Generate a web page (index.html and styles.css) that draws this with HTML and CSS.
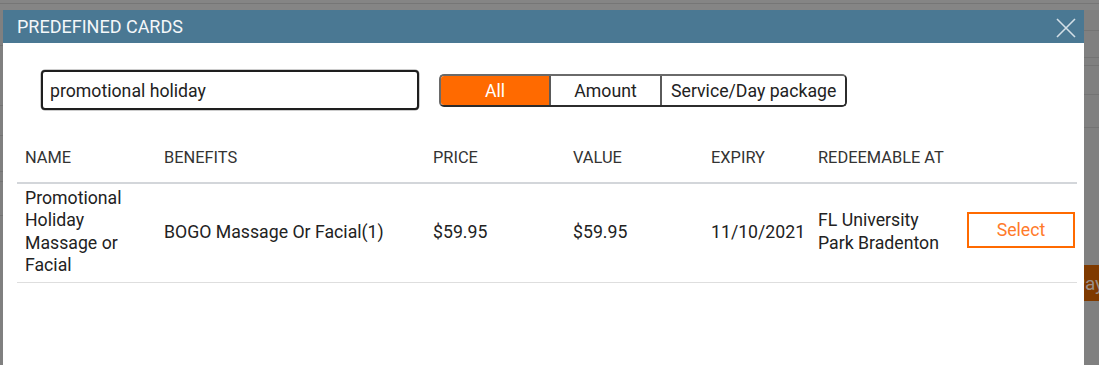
FILE: index.html
```html
<!DOCTYPE html>
<html lang="en">
<head>
<meta charset="utf-8">
<title>Predefined Cards</title>
<link rel="stylesheet" href="styles.css">
</head>
<body>
<div class="page">
  <div class="topbar"><div class="topline"></div></div>
  <div class="stage">
    <div class="strip strip-left">
      <div class="seg s36"></div>
      <div class="seg s60"></div>
      <div class="seg s30"></div>
      <div class="seg s36"></div>
      <div class="seg s10"></div>
      <div class="seg s34"></div>
    </div>

    <div class="modal">
      <div class="modal-header">
        <span class="modal-title">PREDEFINED CARDS</span>
        <button class="close-btn" aria-label="Close">
          <svg width="20" height="20" viewBox="0 0 20 20"><path d="M1 1 L19 19 M19 1 L1 19" stroke="#d3dfe7" stroke-width="1.6" fill="none"/></svg>
        </button>
      </div>
      <div class="modal-body">
        <div class="toolbar">
          <input class="search" type="text" value="promotional holiday">
          <div class="seg-group">
            <button class="seg-btn active btn-all">All</button>
            <button class="seg-btn btn-amount">Amount</button>
            <button class="seg-btn btn-service">Service/Day package</button>
          </div>
        </div>
        <table class="cards">
          <colgroup>
            <col class="c-name"><col class="c-benefits"><col class="c-price"><col class="c-value"><col class="c-expiry"><col class="c-redeem"><col class="c-action">
          </colgroup>
          <thead>
            <tr>
              <th>NAME</th><th>BENEFITS</th><th>PRICE</th><th>VALUE</th><th>EXPIRY</th><th>REDEEMABLE AT</th><th></th>
            </tr>
          </thead>
          <tbody>
            <tr>
              <td>Promotional Holiday Massage or Facial</td>
              <td>BOGO Massage Or Facial(1)</td>
              <td>$59.95</td>
              <td>$59.95</td>
              <td>11/10/2021</td>
              <td>FL University Park Bradenton</td>
              <td class="action"><button class="select-btn">Select</button></td>
            </tr>
          </tbody>
        </table>
      </div>
    </div>

    <div class="strip strip-right">
      <div class="seg s21"></div>
      <div class="seg s27"></div>
      <div class="seg s8"></div>
      <div class="seg s29"></div>
      <div class="seg s33"></div>
      <div class="spacer"></div>
      <div class="pay"><span>Pay</span></div>
      <div class="fill"></div>
    </div>
  </div>
</div>
</body>
</html>
```

FILE: styles.css
```css
* { box-sizing: border-box; }
html, body { margin: 0; padding: 0; }
body {
  width: 1099px;
  height: 365px;
  overflow: hidden;
  background: #808080;
  font-family: Roboto, "Liberation Sans", Arial, sans-serif;
  color: #222;
}
.page { display: flex; flex-direction: column; height: 365px; }
.topbar { height: 10px; background: #858585; padding-top: 3px; }
.topline { height: 1px; background: #767676; }
.stage { display: flex; flex: 1; min-height: 0; }

.strip { display: flex; flex-direction: column; }
.strip-left { width: 3px; }
.strip-right { width: 15px; }
.seg { border-bottom: 1px solid #747474; flex: none; }
.s8 { height: 8px; }
.s10 { height: 10px; }
.s21 { height: 21px; }
.s27 { height: 27px; }
.s29 { height: 29px; }
.s30 { height: 30px; }
.s33 { height: 33px; }
.s34 { height: 34px; }
.s36 { height: 36px; }
.s60 { height: 60px; }
.spacer { height: 137px; flex: none; }
.pay {
  height: 36px;
  flex: none;
  background: #7f3a00;
  overflow: hidden;
  display: flex;
  align-items: center;
  font-size: 19px;
  color: #9a8f88;
}
.pay span { margin-left: -11px; white-space: nowrap; }
.fill { flex: 1; }

.modal {
  width: 1081px;
  background: #fff;
  display: flex;
  flex-direction: column;
}
.modal-header {
  height: 33px;
  background: #4a7893;
  display: flex;
  align-items: center;
  justify-content: space-between;
  padding: 0 8px 0 14px;
}
.modal-title {
  color: #f4f7f9;
  font-size: 18px;
}
.close-btn {
  border: 0;
  background: none;
  padding: 0;
  width: 20px;
  height: 20px;
  display: flex;
  margin-top: 2px;
}

.modal-body { padding: 27px 7px 0 14px; }
.toolbar { display: flex; align-items: center; padding-left: 24px; gap: 20px; }
.search {
  width: 378px;
  height: 40px;
  border: 2px solid #1e1e1e;
  border-radius: 4px;
  padding: 2px 7px 0;
  font-family: inherit;
  font-size: 17.7px;
  color: #222;
  outline: none;
  box-shadow: 0 0 0 0.5px #999;
}
.seg-group {
  display: flex;
  height: 33px;
  border: 2px solid #2c2c2c;
  border-top-color: #6a6a6a;
  border-left-color: #6a6a6a;
  border-radius: 5px;
  overflow: hidden;
}
.seg-btn {
  border: 0;
  border-left: 2px solid #5a5a5a;
  background: #fff;
  font-family: inherit;
  font-size: 17.7px;
  color: #222;
  padding: 1px 9px 0;
  height: 100%;
  white-space: nowrap;
  flex: none;
}
.seg-btn.active { background: #ff6a00; color: #fff; border-left: 0; }
.btn-all { width: 108px; }
.btn-amount { width: 111px; }

.cards {
  margin-top: 24px;
  width: 1060px;
  border-collapse: collapse;
  table-layout: fixed;
}
.c-name { width: 139px; }
.c-benefits { width: 269px; }
.c-price { width: 140px; }
.c-value { width: 138px; }
.c-expiry { width: 107px; }
.c-redeem { width: 149px; }
.c-action { width: 118px; }
.cards th {
  text-align: left;
  font-weight: 400;
  font-size: 16.4px;
  color: #333;
  line-height: 20px;
  padding: 14px 8px 14px;
  border-bottom: 2px solid #d3d6da;
}
.cards td {
  font-size: 17.7px;
  line-height: 22.4px;
  padding: 3px 8px 5px;
  vertical-align: middle;
  border-bottom: 1px solid #dedede;
}
.cards td.action { padding: 0 2px 6px 8px; }
.select-btn {
  width: 108px;
  height: 36px;
  border: 2px solid #ff6a00;
  background: #fff;
  color: #ff7a2a;
  font-family: inherit;
  font-size: 17.7px;
  display: block;
}
```
